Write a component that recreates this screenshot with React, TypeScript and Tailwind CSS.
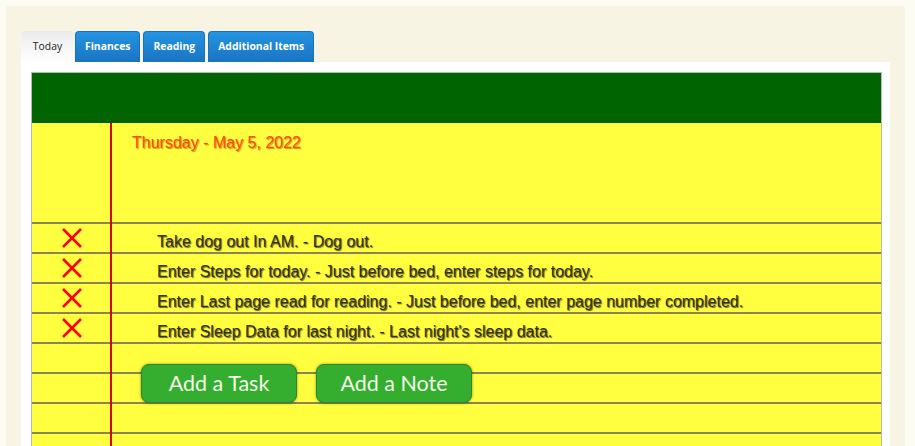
import { ReactNode } from 'react'

const tasks = [
  'Take dog out In AM. - Dog out.',
  'Enter Steps for today. - Just before bed, enter steps for today.',
  'Enter Last page read for reading. - Just before bed, enter page number completed.',
  'Enter Sleep Data for last night. - Last night\'s sleep data.',
]

const tabs = ['Finances', 'Reading', 'Additional Items']

function CrossMark() {
  return (
    <svg width="22" height="20" viewBox="0 0 22 20" className="block">
      <path d="M2 1 L20 19 M20 1 L2 19" stroke="#ff0000" strokeWidth="2.6" strokeLinecap="butt" />
    </svg>
  )
}

function NoteButton({ children }: { children: ReactNode }) {
  return (
    <button className="w-[156px] h-[39px] rounded-[8px] border border-[#2b8a27] bg-[#35ad2f] text-[21.5px] text-[#f1fbe9] font-['Lato',sans-serif] shadow-[0_0_3px_rgba(0,0,0,0.45)] leading-none">
      {children}
    </button>
  )
}

export default function App() {
  return (
    <div className="min-h-screen bg-[#fdfcf2] pt-[6px] pl-[6px] pr-[10px] overflow-hidden">
      <div className="bg-[#f7f4e3] rounded-[3px] pt-[25px] px-[15px] h-[460px]">
        {/* Tabs */}
        <div className="flex items-end h-[31px] font-['Open_Sans',sans-serif] text-[10.4px]">
          <div className="h-[31px] w-[53px] flex items-center justify-center rounded-t-[4px] bg-gradient-to-b from-[#ebebeb] to-white text-[#222]">
            Today
          </div>
          <div className="flex gap-[3px] ml-[1px]">
            {tabs.map((t) => (
              <div
                key={t}
                className="h-[31px] px-[9px] flex items-center rounded-t-[4px] border border-b-0 border-[#1b70b8] bg-gradient-to-b from-[#2394e2] to-[#1a74c2] text-white font-bold"
              >
                {t}
              </div>
            ))}
          </div>
        </div>

        {/* Content */}
        <div className="bg-white pt-[10px] pl-[10px] pr-[8px] h-[400px]">
          <div className="border border-[#b9b9b9] h-full flex flex-col">
            <div className="h-[50px] bg-[#006400]" />
            <div className="relative flex-1 bg-[#ffff3f] font-['Liberation_Sans',Arial,sans-serif] text-[16px] leading-[20px]">
              <div className="absolute left-[78px] top-0 bottom-0 w-[2px] bg-[#cc0a0a]" />
              <div className="h-[99px] pl-[100px] pt-[10px] text-[#ff4a0a] [text-shadow:1px_1px_1px_rgba(150,40,0,0.55)]">
                Thursday - May 5, 2022
              </div>
              <div className="bg-[repeating-linear-gradient(to_bottom,#8a8456_0px,#8a8456_2px,transparent_2px,transparent_30px)] h-full">
                {tasks.map((t) => (
                  <div key={t} className="h-[30px] flex">
                    <div className="w-[80px] flex justify-center pt-[6px]">
                      <CrossMark />
                    </div>
                    <div className="pl-[45px] pt-[10px] text-[#33330f] [text-shadow:1px_1px_1px_#5e5a2c] whitespace-nowrap">
                      {t}
                    </div>
                  </div>
                ))}
                <div className="pt-[22px] pl-[109px] flex gap-[19px]">
                  <NoteButton>Add a Task</NoteButton>
                  <NoteButton>Add a Note</NoteButton>
                </div>
              </div>
            </div>
          </div>
        </div>
      </div>
    </div>
  )
}
